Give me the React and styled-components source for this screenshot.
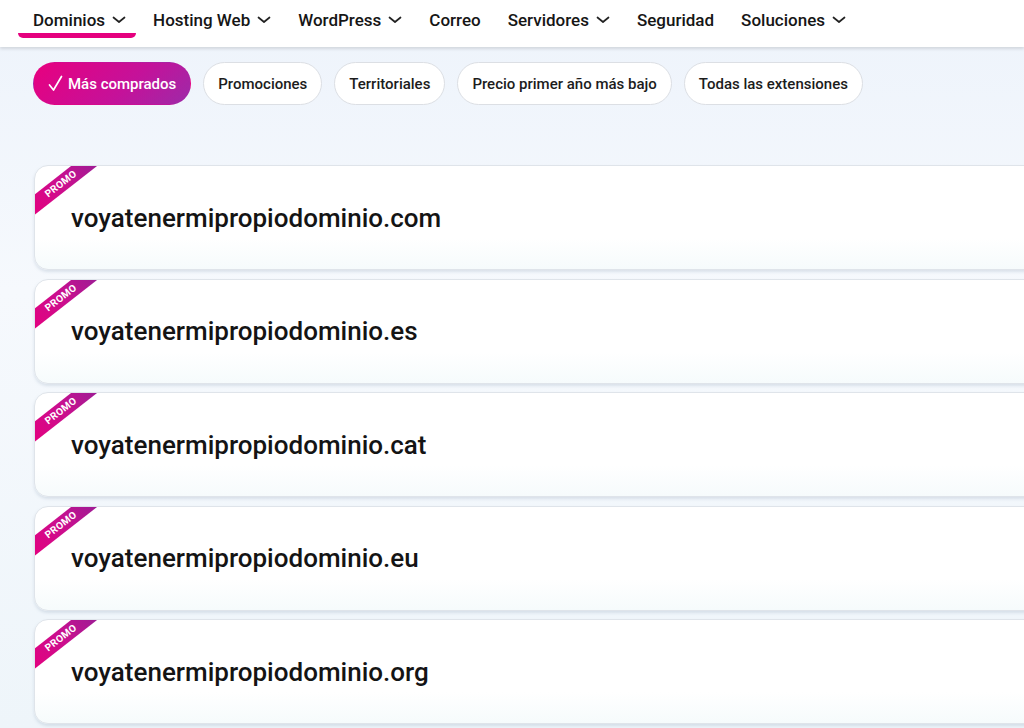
import React from "react";
import styled, { createGlobalStyle } from "styled-components";

const GlobalStyle = createGlobalStyle`
  html, body {
    margin: 0;
    padding: 0;
    overflow: hidden;
  }
  body {
    font-family: Roboto, "Liberation Sans", Arial, sans-serif;
    background: linear-gradient(180deg, #edf3fb 0%, #f6f9fd 40%, #eef5fa 100%);
    color: #111;
  }
`;

const Page = styled.div`
  width: 1024px;
  height: 728px;
  overflow: hidden;
`;

const Header = styled.header`
  height: 47px;
  background: #fff;
  box-shadow: 0 2px 3px rgba(0, 0, 0, 0.12);
  display: flex;
  align-items: stretch;
  padding-left: 33px;
  gap: 27px;
  position: relative;
  z-index: 1;
`;

const NavItem = styled.div`
  display: flex;
  align-items: center;
  gap: 7px;
  font-size: 17px;
  font-weight: 500;
  color: #161616;
  position: relative;
  padding-bottom: 7px;

  ${(p) =>
    p.$active &&
    `
    &::after {
      content: "";
      position: absolute;
      left: -15px;
      right: -10px;
      bottom: 9px;
      height: 5px;
      background: #e5007e;
      border-radius: 0 0 6px 6px;
    }
  `}
`;

const Chevron = () => (
  <svg width="14" height="8" viewBox="0 0 14 8">
    <polyline
      points="1.5,1.5 7,6 12.5,1.5"
      fill="none"
      stroke="#222"
      strokeWidth="1.7"
      strokeLinecap="round"
      strokeLinejoin="round"
    />
  </svg>
);

const Filters = styled.div`
  display: flex;
  gap: 12px;
  padding: 15px 0 0 33px;
`;

const Pill = styled.div`
  height: 43px;
  box-sizing: border-box;
  display: flex;
  align-items: center;
  gap: 5px;
  padding: 0 14px;
  border-radius: 22px;
  font-size: 15px;
  font-weight: 500;
  background: ${(p) =>
    p.$active ? "linear-gradient(135deg, #e8007f 0%, #c4129a 60%, #9d2aa8 100%)" : "#fff"};
  color: ${(p) => (p.$active ? "#fff" : "#1c1c1c")};
  border: 1px solid ${(p) => (p.$active ? "transparent" : "#dcdfe4")};
`;

const Check = () => (
  <svg width="15" height="17" viewBox="0 0 15 17">
    <polyline
      points="1.5,10 5.5,15 13.5,1.5"
      fill="none"
      stroke="#fff"
      strokeWidth="1.7"
      strokeLinecap="round"
      strokeLinejoin="round"
    />
  </svg>
);

const List = styled.div`
  display: flex;
  flex-direction: column;
  gap: 8.5px;
  padding: 60px 0 0 34px;
`;

const Card = styled.div`
  position: relative;
  width: 1100px;
  height: 105px;
  box-sizing: border-box;
  background: linear-gradient(180deg, #ffffff 0%, #ffffff 70%, #f6fbfc 100%);
  border: 1px solid #dfe4ea;
  border-radius: 14px;
  box-shadow: 0 2px 3px rgba(140, 160, 185, 0.25);
  overflow: hidden;
  display: flex;
  align-items: center;
  padding-left: 36px;
`;

const Domain = styled.div`
  font-size: 26px;
  font-weight: 500;
  color: #141414;
`;

const Ribbon = styled.div`
  position: absolute;
  left: -17px;
  top: 10px;
  width: 86px;
  height: 16px;
  transform: rotate(-38deg);
  background: linear-gradient(90deg, #e5007e 0%, #c8108f 55%, #9a1d95 100%);
  color: #fff;
  font-size: 10px;
  font-weight: 700;
  letter-spacing: 0.3px;
  display: flex;
  align-items: center;
  justify-content: center;
  line-height: 1;
`;

const nav = [
  { label: "Dominios", drop: true, active: true },
  { label: "Hosting Web", drop: true },
  { label: "WordPress", drop: true },
  { label: "Correo" },
  { label: "Servidores", drop: true },
  { label: "Seguridad" },
  { label: "Soluciones", drop: true },
];

const filters = [
  "Promociones",
  "Territoriales",
  "Precio primer año más bajo",
  "Todas las extensiones",
];

const domains = ["com", "es", "cat", "eu", "org"];

export default function App() {
  return (
    <Page>
      <GlobalStyle />
      <Header>
        {nav.map((n) => (
          <NavItem key={n.label} $active={n.active}>
            {n.label}
            {n.drop && <Chevron />}
          </NavItem>
        ))}
      </Header>
      <Filters>
        <Pill $active>
          <Check />
          Más comprados
        </Pill>
        {filters.map((f) => (
          <Pill key={f}>{f}</Pill>
        ))}
      </Filters>
      <List>
        {domains.map((d) => (
          <Card key={d}>
            <Ribbon>PROMO</Ribbon>
            <Domain>voyatenermipropiodominio.{d}</Domain>
          </Card>
        ))}
      </List>
    </Page>
  );
}
